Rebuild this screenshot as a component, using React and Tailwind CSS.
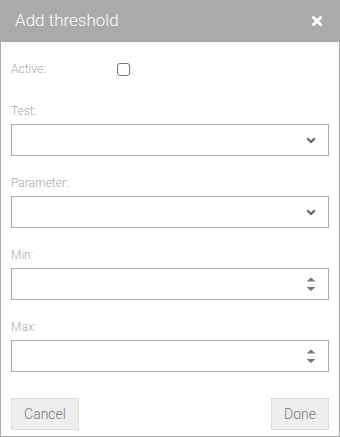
const fields = [
  { label: "Test:", kind: "select" },
  { label: "Parameter:", kind: "select" },
  { label: "Min:", kind: "number" },
  { label: "Max:", kind: "number" },
];

function Chevron() {
  return (
    <svg width="10" height="7" viewBox="0 0 10 7" className="text-[#666]">
      <path d="M1.2 1.2 L5 5 L8.8 1.2" fill="none" stroke="currentColor" strokeWidth="2.2" />
    </svg>
  );
}

function Spinner() {
  return (
    <svg width="10" height="15" viewBox="0 0 10 15" className="text-[#777]">
      <path d="M0.5 4.5 L5 0.5 L9.5 4.5 Z" fill="currentColor" />
      <path d="M0.5 10 L5 14 L9.5 10 Z" fill="currentColor" />
    </svg>
  );
}

export default function App() {
  return (
    <div className="w-[340px] h-[437px] bg-white font-['Roboto',sans-serif] flex flex-col">
      <div className="h-[42px] bg-[#aaaaaa] flex items-center justify-between pl-[15px] pr-[17px] shrink-0">
        <span className="text-white text-[17px] font-light">Add threshold</span>
        <svg width="12" height="12" viewBox="0 0 12 12">
          <path d="M1.5 1.5 L10.5 10.5 M10.5 1.5 L1.5 10.5" stroke="white" strokeWidth="3" />
        </svg>
      </div>

      <div className="flex-1 border-x border-b border-[#aaaaaa] px-[10px] flex flex-col">
        <div className="flex items-center h-4 mt-[19px]">
          <span className="w-[106px] text-[12px] font-light text-[#aaa]">Active:</span>
          <span className="w-[13px] h-[13px] border border-[#777] rounded-[3px]" />
        </div>

        {fields.map((f, i) => (
          <div key={f.label} className={i === 0 ? "mt-[26px]" : "mt-[19px]"}>
            <div className="h-4 leading-4 text-[12px] font-light text-[#aaa]">{f.label}</div>
            <div className="mt-[5px] h-[32px] border border-[#aaaaaa] flex items-center justify-end pr-[12px]">
              {f.kind === "select" ? <Chevron /> : <Spinner />}
            </div>
          </div>
        ))}

        <div className="flex justify-between mt-[26px]">
          <button className="h-[32px] w-[68px] bg-[#efeeee] border border-[#dddddd] text-[#777] text-[14px] font-light">
            Cancel
          </button>
          <button className="h-[32px] w-[58px] bg-[#efeeee] border border-[#dddddd] text-[#777] text-[14px] font-light">
            Done
          </button>
        </div>
      </div>
    </div>
  );
}
